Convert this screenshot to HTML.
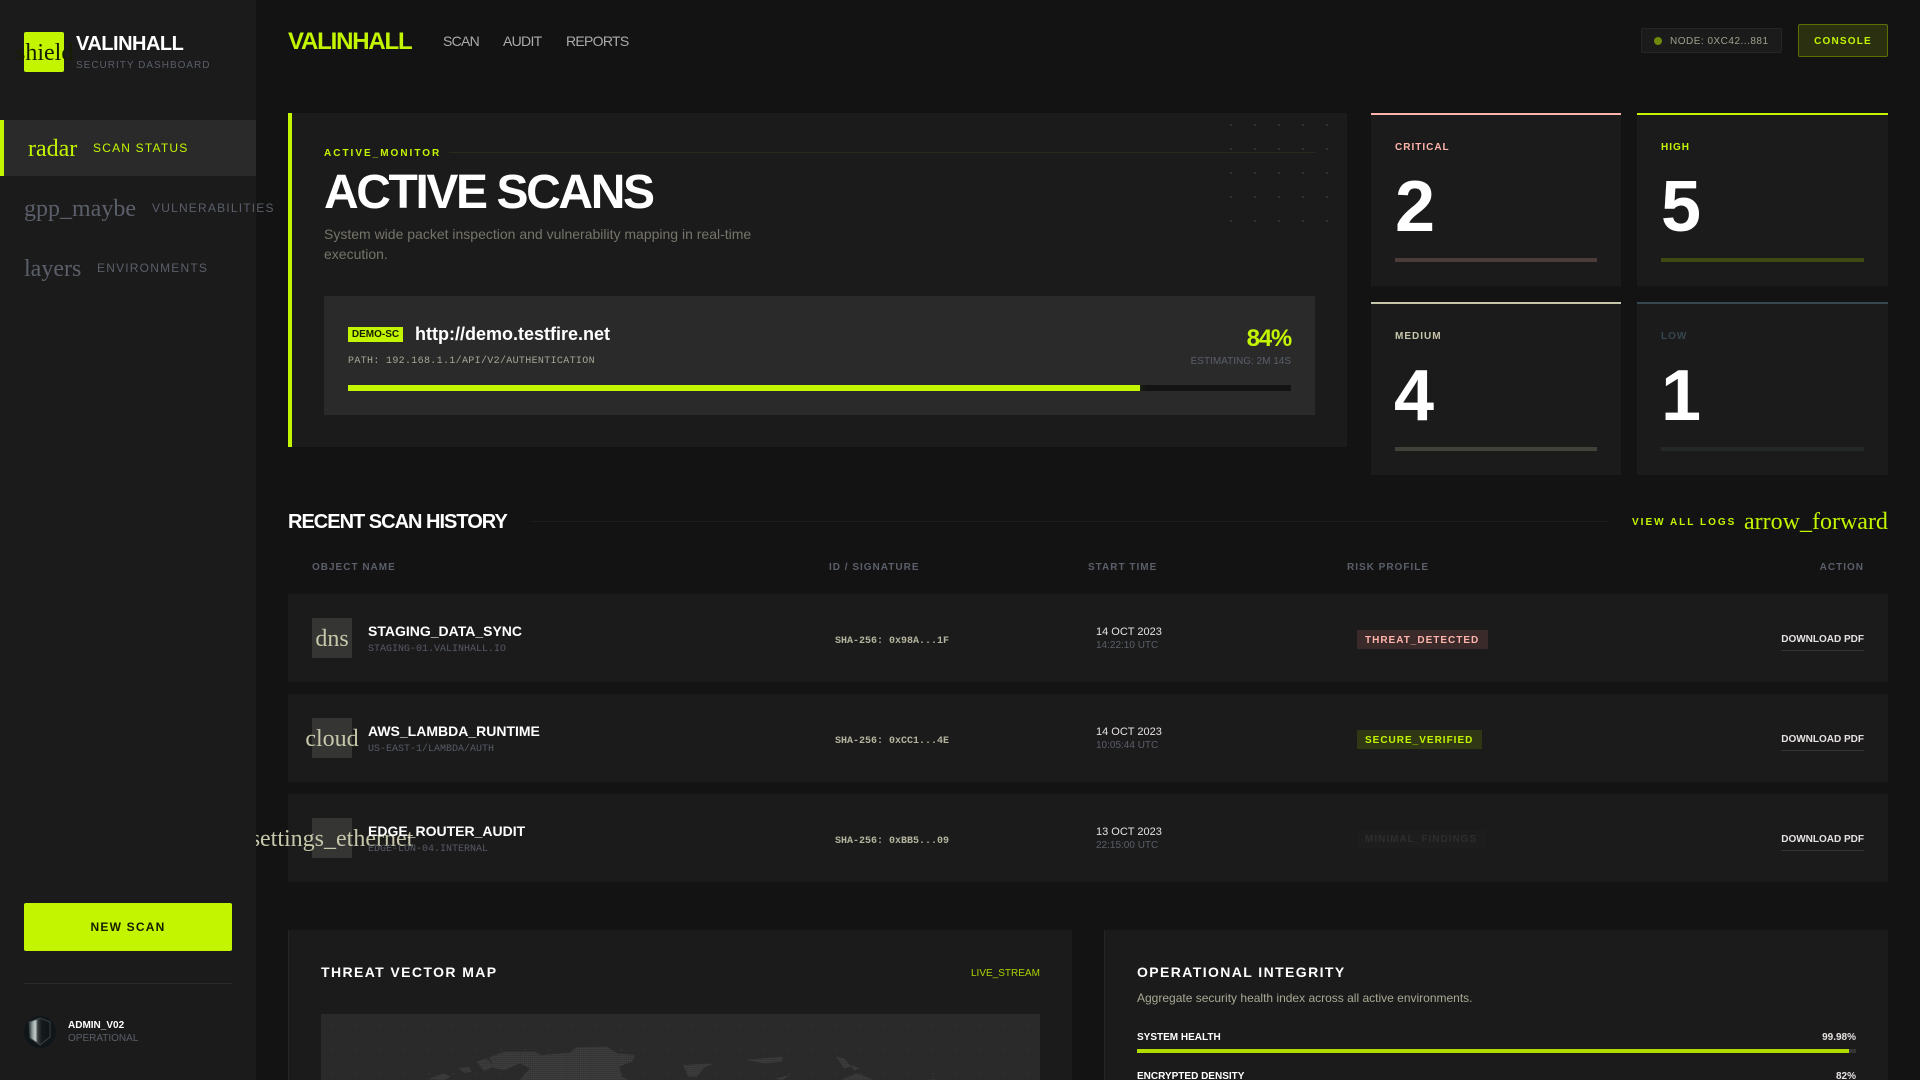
<!DOCTYPE html>
<html lang="en"><head><meta charset="utf-8"><title>VALINHALL</title>
<style>
html,body{margin:0;padding:0;width:1920px;height:1080px;overflow:hidden;background:#131313}
body{position:relative;font-family:"Liberation Sans",sans-serif;color:#e5e2e1}
.a{position:absolute}
.t{position:absolute;white-space:nowrap;line-height:20px;height:20px}
.r{text-align:right}
.m{font-family:"Liberation Mono",monospace}
.i{font-family:"Liberation Serif",serif;font-size:24px;line-height:30px;height:30px;position:absolute;white-space:nowrap}
.b{font-weight:700}
.nl{font-size:12px;letter-spacing:1.2px}
.hd{font-size:10px;font-weight:700;letter-spacing:1px;color:#5a5f6a}
.card{position:absolute;background:#1c1b1b;box-sizing:border-box;border-top:2px solid}
.lab{font-size:10px;font-weight:700;letter-spacing:1px}
.num{position:absolute;font-size:72px;font-weight:700;line-height:72px;color:#fff;white-space:nowrap}
.row{position:absolute;left:288px;width:1600px;height:88px;background:#1c1b1b}
.ico{position:absolute;left:312px;width:40px;height:40px;background:#353534}
.nm{font-size:14px;font-weight:700;color:#fff}
.sub{font-size:10px;color:#555a66}
.sha{font-size:10px;font-weight:700;color:#b4b49e}
.d1{font-size:11px;color:#e5e2e1}
.d2{font-size:10px;color:#5a5f6a}
.bd{position:absolute;left:1357px;height:19px;line-height:21px;font-size:10px;font-weight:700;letter-spacing:1px;padding:0 8px;white-space:nowrap}
.dl{position:absolute;left:1781px;width:83px;height:20px;line-height:20px;font-size:10px;font-weight:700;color:#e5e2e1;white-space:nowrap;text-align:right}
.ul{position:absolute;left:1781px;width:83px;height:1px;background:#353534}
</style></head><body>

<!-- sidebar -->
<div class="a" style="left:0;top:0;width:256px;height:1080px;background:#1c1b1b"></div>
<div class="a" style="left:24px;top:32px;width:40px;height:40px;background:#c3f400;border-radius:2px"></div>
<div class="i" style="left:16px;top:38px;color:#161e00">shield</div>
<div class="t b" style="left:76px;top:34px;font-size:20px;letter-spacing:-.5px;color:#fff">VALINHALL</div>
<div class="t" style="left:76px;top:56px;font-size:10px;letter-spacing:1px;color:#5a5f6a">SECURITY DASHBOARD</div>

<div class="a" style="left:0;top:120px;width:256px;height:56px;background:#2a2a2a"></div>
<div class="a" style="left:0;top:120px;width:4px;height:56px;background:#c3f400"></div>
<div class="i" style="left:28px;top:134px;color:#c3f400">radar</div>
<div class="t nl" style="left:93px;top:138px;color:#c3f400">SCAN STATUS</div>
<div class="i" style="left:24px;top:194px;color:#5a5f6a">gpp_maybe</div>
<div class="t nl" style="left:152px;top:198px;color:#5a5f6a">VULNERABILITIES</div>
<div class="i" style="left:24px;top:254px;color:#5a5f6a">layers</div>
<div class="t nl" style="left:97px;top:258px;color:#5a5f6a">ENVIRONMENTS</div>

<div class="a" style="left:24px;top:903px;width:208px;height:48px;background:#c3f400;border-radius:2px"></div>
<div class="t b" style="left:24px;top:917px;width:208px;text-align:center;font-size:12px;letter-spacing:1.2px;color:#161e00">NEW SCAN</div>
<div class="a" style="left:24px;top:983px;width:208px;height:1px;background:#2a2a2a"></div>
<svg class="a" style="left:24px;top:1016px" width="32" height="32" viewBox="0 0 32 32">
<defs><linearGradient id="sg" x1="0" x2="1" y1="0" y2="0"><stop offset="0" stop-color="#2b3334"/><stop offset=".15" stop-color="#8a9494"/><stop offset=".3" stop-color="#c8d0d0"/><stop offset=".42" stop-color="#39403f"/><stop offset=".6" stop-color="#141a1c"/><stop offset="1" stop-color="#0f1517"/></linearGradient></defs>
<circle cx="16" cy="16" r="16" fill="#0f1619"/>
<path d="M5 6 L16 2 L26 6 L26 21 L16 29 L6 22 Z" fill="url(#sg)" stroke="#3a4244" stroke-width="1"/>
</svg>
<div class="t b" style="left:68px;top:1016px;font-size:10px;color:#fff">ADMIN_V02</div>
<div class="t" style="left:68px;top:1029px;font-size:10px;color:#5a5f6a">OPERATIONAL</div>

<!-- topbar -->
<div class="t b" style="left:288px;top:32px;font-size:24px;letter-spacing:-1.2px;color:#c3f400">VALINHALL</div>
<div class="t" style="left:443px;top:31px;font-size:14px;letter-spacing:-.7px;color:#acabab">SCAN</div>
<div class="t" style="left:503px;top:31px;font-size:14px;letter-spacing:-.7px;color:#acabab">AUDIT</div>
<div class="t" style="left:566px;top:31px;font-size:14px;letter-spacing:-.7px;color:#acabab">REPORTS</div>
<div class="a" style="left:1641px;top:28px;width:141px;height:25px;box-sizing:border-box;background:#1c1b1b;border:1px solid #262626;border-radius:2px"></div>
<div class="a" style="left:1654px;top:37px;width:8px;height:8px;border-radius:50%;background:#6f8a0a"></div>
<div class="t" style="left:1670px;top:32px;font-size:10px;letter-spacing:.5px;color:#a0a08c">NODE: 0XC42...881</div>
<div class="a" style="left:1798px;top:24px;width:90px;height:33px;box-sizing:border-box;background:#2b3110;border:1px solid #5a7000;border-radius:2px"></div>
<div class="t b" style="left:1798px;top:32px;width:90px;text-align:center;font-size:10px;letter-spacing:1.2px;color:#c3f400">CONSOLE</div>

<!-- hero -->
<div class="a" style="left:288px;top:113px;width:1059px;height:334px;background:#1c1b1b"></div>
<div class="a" style="left:288px;top:113px;width:4px;height:334px;background:#c3f400"></div>
<svg class="a" style="left:1200px;top:113px" width="147" height="120"><g fill="#333">
<rect x="30" y="11" width="2" height="2"/><rect x="54" y="11" width="2" height="2"/><rect x="78" y="11" width="2" height="2"/><rect x="102" y="11" width="2" height="2"/><rect x="126" y="11" width="2" height="2"/>
<rect x="30" y="35" width="2" height="2"/><rect x="54" y="35" width="2" height="2"/><rect x="78" y="35" width="2" height="2"/><rect x="102" y="35" width="2" height="2"/><rect x="126" y="35" width="2" height="2"/>
<rect x="30" y="59" width="2" height="2"/><rect x="54" y="59" width="2" height="2"/><rect x="78" y="59" width="2" height="2"/><rect x="102" y="59" width="2" height="2"/><rect x="126" y="59" width="2" height="2"/>
<rect x="30" y="83" width="2" height="2"/><rect x="54" y="83" width="2" height="2"/><rect x="78" y="83" width="2" height="2"/><rect x="102" y="83" width="2" height="2"/><rect x="126" y="83" width="2" height="2"/>
<rect x="30" y="107" width="2" height="2"/><rect x="54" y="107" width="2" height="2"/><rect x="78" y="107" width="2" height="2"/><rect x="102" y="107" width="2" height="2"/><rect x="126" y="107" width="2" height="2"/>
</g></svg>
<div class="t b" style="left:324px;top:144px;font-size:10px;letter-spacing:2px;color:#c3f400">ACTIVE_MONITOR</div>
<div class="a" style="left:449px;top:152px;width:866px;height:1px;background:#282a1a"></div>
<div class="a b" style="left:324px;top:163px;font-size:48px;line-height:60px;letter-spacing:-2.4px;color:#fff;white-space:nowrap">ACTIVE SCANS</div>
<div class="t" style="left:324px;top:224px;font-size:14px;color:#74746a">System wide packet inspection and vulnerability mapping in real-time</div>
<div class="t" style="left:324px;top:244px;font-size:14px;color:#74746a">execution.</div>
<div class="a" style="left:324px;top:296px;width:991px;height:119px;background:#2a2a2a"></div>
<div class="a" style="left:348px;top:327px;width:55px;height:15px;background:#c3f400"></div>
<div class="t b" style="left:348px;top:325px;width:55px;text-align:center;font-size:10px;color:#161e00">DEMO-SC</div>
<div class="t b" style="left:415px;top:324px;font-size:18px;color:#fff">http://demo.testfire.net</div>
<div class="t m" style="left:348px;top:352px;font-size:10px;letter-spacing:.33px;color:#a6a696">PATH: 192.168.1.1/API/V2/AUTHENTICATION</div>
<div class="t b r" style="left:1091px;width:200px;top:329px;font-size:24px;letter-spacing:-1.2px;color:#c3f400">84%</div>
<div class="t r" style="left:1091px;width:200px;top:352px;font-size:10px;color:#5a5f6a">ESTIMATING: 2M 14S</div>
<div class="a" style="left:348px;top:385px;width:943px;height:6px;background:#131313;overflow:hidden"><div style="width:792px;height:6px;background:#c3f400;box-shadow:0 0 8px rgba(195,244,0,.3)"></div></div>

<!-- cards -->
<div class="card" style="left:1371px;top:113px;width:250px;height:173px;border-color:#ffb4ab"></div>
<div class="t lab" style="left:1395px;top:138px;color:#ffb4ab">CRITICAL</div>
<div class="num" style="left:1395px;top:171px">2</div>
<div class="a" style="left:1395px;top:258px;width:202px;height:4px;background:#4b3b3a"></div>
<div class="card" style="left:1637px;top:113px;width:251px;height:173px;border-color:#c3f400"></div>
<div class="t lab" style="left:1661px;top:138px;color:#c3f400">HIGH</div>
<div class="num" style="left:1661px;top:171px">5</div>
<div class="a" style="left:1661px;top:258px;width:203px;height:4px;background:#3f4a12"></div>
<div class="card" style="left:1371px;top:302px;width:250px;height:173px;border-color:#c6c6aa"></div>
<div class="t lab" style="left:1395px;top:327px;color:#c6c6aa">MEDIUM</div>
<div class="num" style="left:1394px;top:360px">4</div>
<div class="a" style="left:1395px;top:447px;width:202px;height:4px;background:#41413a"></div>
<div class="card" style="left:1637px;top:302px;width:251px;height:173px;border-color:#36474f"></div>
<div class="t lab" style="left:1661px;top:327px;color:#36474f">LOW</div>
<div class="num" style="left:1661px;top:360px">1</div>
<div class="a" style="left:1661px;top:447px;width:203px;height:4px;background:#242828"></div>

<!-- history -->
<div class="t b" style="left:288px;top:512px;font-size:20px;letter-spacing:-1px;color:#fff">RECENT SCAN HISTORY</div>
<div class="a" style="left:531px;top:521px;width:1076px;height:1px;background:#1f1f1f"></div>
<div class="t b" style="left:1632px;top:513px;font-size:10px;letter-spacing:2px;color:#c3f400">VIEW ALL LOGS</div>
<div class="i" style="left:1744px;top:507px;color:#c3f400">arrow_forward</div>

<div class="t hd" style="left:312px;top:558px">OBJECT NAME</div>
<div class="t hd" style="left:829px;top:558px">ID / SIGNATURE</div>
<div class="t hd" style="left:1088px;top:558px">START TIME</div>
<div class="t hd" style="left:1347px;top:558px">RISK PROFILE</div>
<div class="t hd r" style="left:1664px;width:200px;top:558px">ACTION</div>

<div class="row" style="top:594px"></div>
<div class="row" style="top:694px"></div>
<div class="row" style="top:794px"></div>

<div class="ico" style="top:618px"></div>
<div class="i" style="left:312px;width:40px;top:624px;color:#c6c6aa;display:flex;justify-content:center">dns</div>
<div class="t nm" style="left:368px;top:621px">STAGING_DATA_SYNC</div>
<div class="t m sub" style="left:368px;top:640px">STAGING-01.VALINHALL.IO</div>
<div class="t m sha" style="left:835px;top:632px">SHA-256: 0x98A...1F</div>
<div class="t d1" style="left:1096px;top:622px">14 OCT 2023</div>
<div class="t d2" style="left:1096px;top:636px">14:22:10 UTC</div>
<div class="bd" style="top:630px;width:115px;background:#3a2a29;color:#ffb4ab">THREAT_DETECTED</div>
<div class="dl" style="top:630px">DOWNLOAD PDF</div>
<div class="ul" style="top:650px"></div>

<div class="ico" style="top:718px"></div>
<div class="i" style="left:312px;width:40px;top:724px;color:#c6c6aa;display:flex;justify-content:center">cloud</div>
<div class="t nm" style="left:368px;top:721px">AWS_LAMBDA_RUNTIME</div>
<div class="t m sub" style="left:368px;top:740px">US-EAST-1/LAMBDA/AUTH</div>
<div class="t m sha" style="left:835px;top:732px">SHA-256: 0xCC1...4E</div>
<div class="t d1" style="left:1096px;top:722px">14 OCT 2023</div>
<div class="t d2" style="left:1096px;top:736px">10:05:44 UTC</div>
<div class="bd" style="top:730px;width:109px;background:#2f3714;color:#c3f400">SECURE_VERIFIED</div>
<div class="dl" style="top:730px">DOWNLOAD PDF</div>
<div class="ul" style="top:750px"></div>

<div class="ico" style="top:818px"></div>
<div class="i" style="left:312px;width:40px;top:824px;color:#c6c6aa;display:flex;justify-content:center">settings_ethernet</div>
<div class="a" style="left:244px;top:825px;width:12px;height:40px;background:#1c1b1b"></div>
<div class="t nm" style="left:368px;top:821px">EDGE_ROUTER_AUDIT</div>
<div class="t m sub" style="left:368px;top:840px">EDGE-LON-04.INTERNAL</div>
<div class="t m sha" style="left:835px;top:832px">SHA-256: 0xBB5...09</div>
<div class="t d1" style="left:1096px;top:822px">13 OCT 2023</div>
<div class="t d2" style="left:1096px;top:836px">22:15:00 UTC</div>
<div class="bd" style="top:830px;line-height:19px;background:#1d1d1d;color:#2c2e30">MINIMAL_FINDINGS</div>
<div class="dl" style="top:830px">DOWNLOAD PDF</div>
<div class="ul" style="top:850px"></div>

<!-- bottom panels -->
<div class="a" style="left:288px;top:930px;width:784px;height:150px;background:#1c1b1b;box-sizing:border-box;border-left:1px solid #262626"></div>
<div class="t b" style="left:321px;top:962px;font-size:14px;letter-spacing:1.4px;color:#fff">THREAT VECTOR MAP</div>
<div class="t" style="left:971px;top:964px;font-size:10px;color:#a8d200">LIVE_STREAM</div>
<div class="a" style="left:321px;top:1014px;width:719px;height:66px;background:#2a2a2a"></div>
<svg class="a" style="left:321px;top:1014px" width="719" height="66">
<g fill="#343434">
<circle cx="12" cy="12" r="1"/><circle cx="36" cy="12" r="1"/><circle cx="60" cy="12" r="1"/><circle cx="84" cy="12" r="1"/><circle cx="108" cy="12" r="1"/><circle cx="132" cy="12" r="1"/><circle cx="156" cy="12" r="1"/><circle cx="180" cy="12" r="1"/><circle cx="204" cy="12" r="1"/><circle cx="228" cy="12" r="1"/><circle cx="252" cy="12" r="1"/><circle cx="276" cy="12" r="1"/><circle cx="300" cy="12" r="1"/><circle cx="324" cy="12" r="1"/><circle cx="348" cy="12" r="1"/><circle cx="372" cy="12" r="1"/><circle cx="396" cy="12" r="1"/><circle cx="420" cy="12" r="1"/><circle cx="444" cy="12" r="1"/><circle cx="468" cy="12" r="1"/><circle cx="492" cy="12" r="1"/><circle cx="516" cy="12" r="1"/><circle cx="540" cy="12" r="1"/><circle cx="564" cy="12" r="1"/><circle cx="588" cy="12" r="1"/><circle cx="612" cy="12" r="1"/><circle cx="636" cy="12" r="1"/><circle cx="660" cy="12" r="1"/><circle cx="684" cy="12" r="1"/><circle cx="708" cy="12" r="1"/>
<circle cx="12" cy="36" r="1"/><circle cx="36" cy="36" r="1"/><circle cx="60" cy="36" r="1"/><circle cx="84" cy="36" r="1"/><circle cx="108" cy="36" r="1"/><circle cx="132" cy="36" r="1"/><circle cx="156" cy="36" r="1"/><circle cx="180" cy="36" r="1"/><circle cx="204" cy="36" r="1"/><circle cx="228" cy="36" r="1"/><circle cx="252" cy="36" r="1"/><circle cx="276" cy="36" r="1"/><circle cx="300" cy="36" r="1"/><circle cx="324" cy="36" r="1"/><circle cx="348" cy="36" r="1"/><circle cx="372" cy="36" r="1"/><circle cx="396" cy="36" r="1"/><circle cx="420" cy="36" r="1"/><circle cx="444" cy="36" r="1"/><circle cx="468" cy="36" r="1"/><circle cx="492" cy="36" r="1"/><circle cx="516" cy="36" r="1"/><circle cx="540" cy="36" r="1"/><circle cx="564" cy="36" r="1"/><circle cx="588" cy="36" r="1"/><circle cx="612" cy="36" r="1"/><circle cx="636" cy="36" r="1"/><circle cx="660" cy="36" r="1"/><circle cx="684" cy="36" r="1"/><circle cx="708" cy="36" r="1"/>
<circle cx="12" cy="60" r="1"/><circle cx="36" cy="60" r="1"/><circle cx="60" cy="60" r="1"/><circle cx="84" cy="60" r="1"/><circle cx="108" cy="60" r="1"/><circle cx="132" cy="60" r="1"/><circle cx="156" cy="60" r="1"/><circle cx="180" cy="60" r="1"/><circle cx="204" cy="60" r="1"/><circle cx="228" cy="60" r="1"/><circle cx="252" cy="60" r="1"/><circle cx="276" cy="60" r="1"/><circle cx="300" cy="60" r="1"/><circle cx="324" cy="60" r="1"/><circle cx="348" cy="60" r="1"/><circle cx="372" cy="60" r="1"/><circle cx="396" cy="60" r="1"/><circle cx="420" cy="60" r="1"/><circle cx="444" cy="60" r="1"/><circle cx="468" cy="60" r="1"/><circle cx="492" cy="60" r="1"/><circle cx="516" cy="60" r="1"/><circle cx="540" cy="60" r="1"/><circle cx="564" cy="60" r="1"/><circle cx="588" cy="60" r="1"/><circle cx="612" cy="60" r="1"/><circle cx="636" cy="60" r="1"/><circle cx="660" cy="60" r="1"/><circle cx="684" cy="60" r="1"/><circle cx="708" cy="60" r="1"/>
</g></svg>
<svg class="a" style="left:280px;top:920px" width="800" height="160" viewBox="0 0 1568 480" preserveAspectRatio="none">
<defs><pattern id="dp" width="4" height="6" patternUnits="userSpaceOnUse"><rect width="4" height="6" fill="#363636"/><rect width="2" height="3" fill="#414141"/></pattern></defs>
<g fill="url(#dp)">
<polygon points="410,412 440,395 500,395 512,405 570,397 580,382 640,380 662,400 696,405 690,425 665,440 670,470 682,480 470,480 490,445 470,430 440,450 420,445"/>
<polygon points="385,425 405,415 420,440 400,452"/>
<polygon points="350,445 370,440 376,456 360,458"/>
<polygon points="290,478 320,460 335,470 322,480"/>
<polygon points="790,435 850,430 830,445 818,470 800,470"/>
<polygon points="915,420 945,415 985,410 985,425 950,430 930,425"/>
<polygon points="1090,410 1105,415 1120,440 1105,445"/>
<polygon points="1120,435 1136,445 1125,452"/>
<polygon points="1100,480 1130,460 1165,480"/>
<polygon points="970,476 1000,465 985,480"/>
<polygon points="1255,480 1285,478 1285,480"/>
</g></svg>

<div class="a" style="left:1104px;top:930px;width:784px;height:150px;background:#1c1b1b;box-sizing:border-box;border-left:1px solid #262626"></div>
<div class="t b" style="left:1137px;top:962px;font-size:14px;letter-spacing:1.4px;color:#fff">OPERATIONAL INTEGRITY</div>
<div class="t" style="left:1137px;top:988px;font-size:12px;color:#a8a894">Aggregate security health index across all active environments.</div>
<div class="t b" style="left:1137px;top:1028px;font-size:10px;color:#fff">SYSTEM HEALTH</div>
<div class="t b r" style="left:1656px;width:200px;top:1028px;font-size:10px;color:#e5e2e1">99.98%</div>
<div class="a" style="left:1137px;top:1049px;width:719px;height:4px;background:#353534"></div>
<div class="a" style="left:1137px;top:1049px;width:712px;height:4px;background:#b2dc00"></div>
<div class="t b" style="left:1137px;top:1067px;font-size:10px;color:#fff">ENCRYPTED DENSITY</div>
<div class="t b r" style="left:1656px;width:200px;top:1067px;font-size:10px;color:#e5e2e1">82%</div>
</body></html>
